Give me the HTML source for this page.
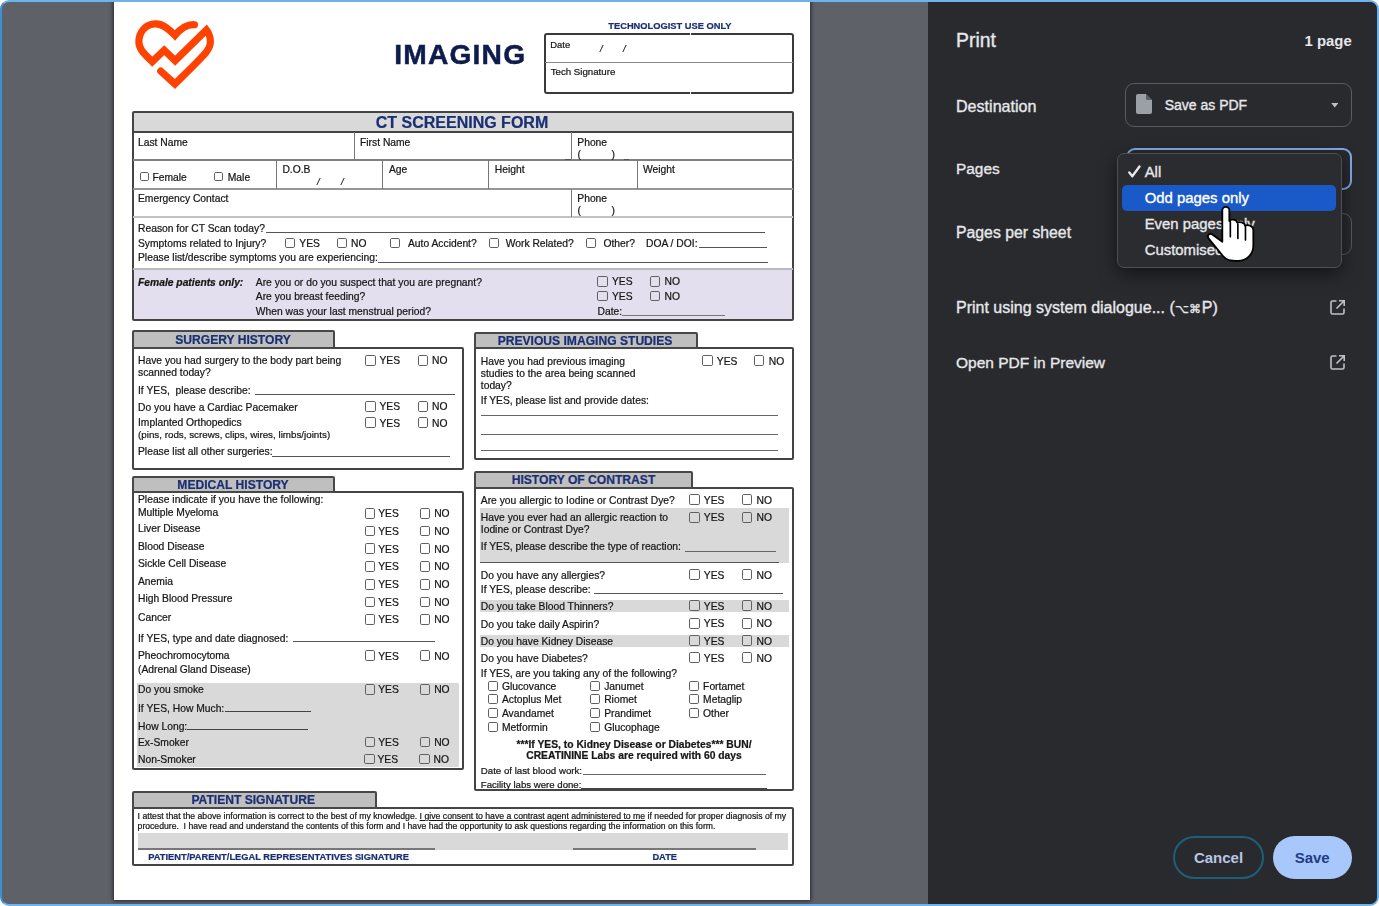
<!DOCTYPE html>
<html><head><meta charset="utf-8"><title>Print</title>
<style>
html,body{margin:0;padding:0;background:#fff}
body{width:1379px;height:906px;overflow:hidden;position:relative;font-family:"Liberation Sans",Arial,sans-serif}
#frame{position:absolute;left:0;top:0;width:1379px;height:906px;box-sizing:border-box;border:2px solid #6db3ee;border-left-color:#3f8fd6;border-radius:9px;background:#5f6169;overflow:hidden}
#root{position:absolute;left:-2px;top:-2px;width:1379px;height:906px;filter:blur(0.45px)}
#pagebg{position:absolute;left:114.2px;top:0;width:696.1px;height:900px;background:#fff;box-shadow:0 0 4px 1px rgba(0,0,0,.6)}
#panel{position:absolute;left:927.5px;top:0;width:452px;height:906px;background:#292a2e}
#page{position:absolute;left:0;top:0;color:#161616;-webkit-text-stroke:0.22px #161616;filter:blur(0.35px)}
.t{position:absolute;white-space:nowrap;line-height:1}
.t.c{text-align:center}
.bd{font-weight:bold}
.p{color:#e6e8eb}
i{display:block}
.abs,.l,.b,.cb,.sel,.menu,.btn{position:absolute;box-sizing:border-box}
.cb{border:1.300px solid #606060;border-radius:1.800px}
.m{-webkit-text-stroke:0.35px #e6e8eb}
.sel{border:1.500px solid #595b60;border-radius:9px}
.menu{background:#2b2c2f;border:1px solid #4e4f53;border-radius:7px;box-shadow:0 6px 18px rgba(0,0,0,.5)}
.btn{border-radius:22px;font-weight:bold;font-size:15px;text-align:center;line-height:39.300px}
</style></head><body>
<div id="frame"><div id="root">
<div id="pagebg"></div>
<div id="page">
<svg class="abs" style="left:120px;top:10px" width="120" height="90" viewBox="0 0 1208 906"><path d="M750 148 C 660 140 600 200 553 255 C 500 200 440 140 360 140 C 250 140 190 230 190 320 C 190 400 250 445 325 520 L 445 405 L 555 510 L 870 200 C 900 240 910 280 910 320 C 910 400 870 430 553 745 L 410 615" fill="none" stroke="#ff4200" stroke-width="72" stroke-linecap="round" stroke-linejoin="miter"/></svg>
<div class="t bd" style="left:394.2px;top:40.4px;font-size:28.2px;color:#0e1c4d;letter-spacing:1.2px;-webkit-text-stroke:0.5px #0e1c4d">IMAGING</div>
<div class="t bd" style="left:608.3px;top:22.3px;font-size:9.3px;color:#1b2f73;-webkit-text-stroke-color:#1b2f73">TECHNOLOGIST USE ONLY</div>
<i class="b" style="left:544.0px;top:33.3px;width:250.0px;height:60.7px;border:2px solid #3a3a3a;background:transparent;border-radius:3px"></i>
<i class="l" style="left:545.0px;top:62.3px;width:248.0px;height:1px;background:#888"></i>
<i class="l" style="left:689.5px;top:33.0px;width:1.3px;height:3.0px;background:#fff;"></i>
<i class="l" style="left:689.5px;top:91.5px;width:1.3px;height:3.0px;background:#fff;"></i>
<div class="t" style="left:550.3px;top:40.3px;font-size:9.4px;">Date</div>
<div class="t" style="left:600.0px;top:44.4px;font-size:9.4px;font-style:italic">/</div>
<div class="t" style="left:623.0px;top:44.4px;font-size:9.4px;font-style:italic">/</div>
<div class="t" style="left:550.7px;top:66.6px;font-size:9.7px;">Tech Signature</div>
<i class="l" style="left:132.7px;top:112.0px;width:660.3px;height:19.5px;background:#d9d9d9;"></i>
<i class="l" style="left:132.7px;top:269.5px;width:660.3px;height:50.3px;background:#e4dfee;"></i>
<i class="b" style="left:131.7px;top:111.0px;width:662.3px;height:209.8px;border:2px solid #444;background:transparent;border-radius:2px"></i>
<i class="l" style="left:132.7px;top:130.5px;width:660.3px;height:2px;background:#444"></i>
<div class="t c bd" style="left:262.0px;width:400px;top:115.4px;font-size:16px;color:#1b2f73;-webkit-text-stroke-color:#1b2f73">CT SCREENING FORM</div>
<i class="l" style="left:132.7px;top:158.5px;width:660.3px;height:2px;background:#808080"></i>
<i class="l" style="left:132.7px;top:187.7px;width:660.3px;height:2px;background:#969696"></i>
<i class="l" style="left:132.7px;top:215.8px;width:660.3px;height:2.4px;background:#c2c2c2"></i>
<i class="l" style="left:132.7px;top:268.3px;width:660.3px;height:2px;background:#bbb"></i>
<i class="l" style="left:353.5px;top:132.0px;width:1px;height:27.5px;background:#777"></i>
<i class="l" style="left:570.5px;top:132.0px;width:1px;height:27.5px;background:#777"></i>
<i class="l" style="left:570.5px;top:188.5px;width:1px;height:28.0px;background:#777"></i>
<i class="l" style="left:276.1px;top:159.5px;width:1px;height:29.0px;background:#777"></i>
<i class="l" style="left:382.2px;top:159.5px;width:1px;height:29.0px;background:#777"></i>
<i class="l" style="left:487.5px;top:159.5px;width:1px;height:29.0px;background:#777"></i>
<i class="l" style="left:636.5px;top:159.5px;width:1px;height:29.0px;background:#777"></i>
<div class="t" style="left:138.0px;top:138.1px;font-size:10.3px;">Last Name</div>
<div class="t" style="left:360.0px;top:138.1px;font-size:10.3px;">First Name</div>
<div class="t" style="left:577.3px;top:138.1px;font-size:10.3px;">Phone</div>
<div class="t" style="left:577.5px;top:150.1px;font-size:10.3px;">(</div>
<div class="t" style="left:611.5px;top:150.1px;font-size:10.3px;">)</div>
<i class="l" style="left:565.0px;top:159.1px;width:6.0px;height:1px;background:#555"></i>
<i class="l" style="left:623.5px;top:159.1px;width:5.5px;height:1px;background:#555"></i>
<i class="cb" style="left:140.0px;top:171.8px;width:9px;height:9px"></i>
<div class="t" style="left:152.5px;top:172.6px;font-size:10.3px;">Female</div>
<i class="cb" style="left:214.0px;top:171.8px;width:9px;height:9px"></i>
<div class="t" style="left:227.8px;top:172.6px;font-size:10.3px;">Male</div>
<div class="t" style="left:282.4px;top:165.1px;font-size:10.3px;">D.O.B</div>
<div class="t" style="left:317.0px;top:177.4px;font-size:9.5px;font-style:italic">/</div>
<div class="t" style="left:341.0px;top:177.4px;font-size:9.5px;font-style:italic">/</div>
<div class="t" style="left:389.0px;top:165.1px;font-size:10.3px;">Age</div>
<div class="t" style="left:494.8px;top:165.1px;font-size:10.3px;">Height</div>
<div class="t" style="left:643.0px;top:165.1px;font-size:10.3px;">Weight</div>
<div class="t" style="left:138.0px;top:193.8px;font-size:10.3px;">Emergency Contact</div>
<div class="t" style="left:577.3px;top:193.8px;font-size:10.3px;">Phone</div>
<div class="t" style="left:577.5px;top:205.6px;font-size:10.3px;">(</div>
<div class="t" style="left:611.5px;top:205.6px;font-size:10.3px;">)</div>
<div class="t" style="left:138.0px;top:223.8px;font-size:10.3px;">Reason for CT Scan today?</div>
<i class="l" style="left:265.5px;top:232.1px;width:499.0px;height:1px;background:#555"></i>
<div class="t" style="left:138.0px;top:238.8px;font-size:10.3px;">Symptoms related to Injury?</div>
<i class="cb" style="left:285.0px;top:238.2px;width:10px;height:10px"></i>
<div class="t" style="left:299.3px;top:239.0px;font-size:10.3px;">YES</div>
<i class="cb" style="left:337.0px;top:238.2px;width:10px;height:10px"></i>
<div class="t" style="left:351.0px;top:239.0px;font-size:10.3px;">NO</div>
<i class="cb" style="left:390.0px;top:238.2px;width:10px;height:10px"></i>
<div class="t" style="left:408.0px;top:239.0px;font-size:10.3px;">Auto Accident?</div>
<i class="cb" style="left:489.0px;top:238.2px;width:10px;height:10px"></i>
<div class="t" style="left:505.7px;top:239.0px;font-size:10.3px;">Work Related?</div>
<i class="cb" style="left:586.0px;top:238.2px;width:10px;height:10px"></i>
<div class="t" style="left:603.4px;top:239.0px;font-size:10.3px;">Other?</div>
<div class="t" style="left:646.0px;top:239.0px;font-size:10.3px;">DOA / DOI:</div>
<i class="l" style="left:698.6px;top:247.0px;width:68.4px;height:1px;background:#555"></i>
<div class="t" style="left:138.0px;top:253.2px;font-size:10.3px;">Please list/describe symptoms you are experiencing:</div>
<i class="l" style="left:378.4px;top:261.5px;width:390.0px;height:1px;background:#555"></i>
<div class="t bd" style="left:138.0px;top:277.9px;font-size:10.3px;font-style:italic">Female patients only:</div>
<div class="t" style="left:255.8px;top:277.9px;font-size:10.3px;">Are you or do you suspect that you are pregnant?</div>
<div class="t" style="left:255.8px;top:291.9px;font-size:10.3px;">Are you breast feeding?</div>
<div class="t" style="left:255.8px;top:306.6px;font-size:10.3px;">When was your last menstrual period?</div>
<i class="cb" style="left:597.0px;top:276.0px;width:10.8px;height:10.8px"></i>
<div class="t" style="left:611.9px;top:277.3px;font-size:10.3px;">YES</div>
<i class="cb" style="left:649.5px;top:276.0px;width:10.8px;height:10.8px"></i>
<div class="t" style="left:664.6px;top:277.3px;font-size:10.3px;">NO</div>
<i class="cb" style="left:597.0px;top:290.5px;width:10.8px;height:10.8px"></i>
<div class="t" style="left:611.9px;top:291.8px;font-size:10.3px;">YES</div>
<i class="cb" style="left:649.5px;top:290.5px;width:10.8px;height:10.8px"></i>
<div class="t" style="left:664.6px;top:291.8px;font-size:10.3px;">NO</div>
<div class="t" style="left:597.6px;top:306.6px;font-size:10.3px;">Date:</div>
<i class="l" style="left:622.0px;top:314.5px;width:103.2px;height:1px;background:#777"></i>
<i class="b" style="left:131.7px;top:347.0px;width:332.3px;height:123.0px;border:2px solid #444;background:transparent;border-radius:2px"></i>
<i class="b" style="left:131.7px;top:330.0px;width:203.3px;height:19.0px;border:2px solid #484848;background:#bfbfbf;border-radius:2px 2px 0 0"></i>
<div class="t c bd" style="left:33.0px;width:400px;top:333.8px;font-size:12.1px;color:#1b2f73;-webkit-text-stroke-color:#1b2f73">SURGERY HISTORY</div>
<div class="t" style="left:138.0px;top:356.1px;font-size:10.3px;">Have you had surgery to the body part being</div>
<div class="t" style="left:138.0px;top:368.3px;font-size:10.3px;">scanned today?</div>
<i class="cb" style="left:365.1px;top:354.9px;width:10.8px;height:10.8px"></i>
<div class="t" style="left:379.5px;top:356.2px;font-size:10.3px;">YES</div>
<i class="cb" style="left:417.5px;top:354.9px;width:10.8px;height:10.8px"></i>
<div class="t" style="left:432.1px;top:356.2px;font-size:10.3px;">NO</div>
<div class="t" style="left:138.0px;top:385.8px;font-size:10.3px;white-space:pre">If YES,  please describe:</div>
<i class="l" style="left:254.5px;top:393.8px;width:200.0px;height:1px;background:#555"></i>
<div class="t" style="left:138.0px;top:402.9px;font-size:10.3px;">Do you have a Cardiac Pacemaker</div>
<i class="cb" style="left:365.1px;top:401.1px;width:10.8px;height:10.8px"></i>
<div class="t" style="left:379.5px;top:402.4px;font-size:10.3px;">YES</div>
<i class="cb" style="left:417.5px;top:401.1px;width:10.8px;height:10.8px"></i>
<div class="t" style="left:432.1px;top:402.4px;font-size:10.3px;">NO</div>
<div class="t" style="left:138.0px;top:418.3px;font-size:10.3px;">Implanted Orthopedics</div>
<i class="cb" style="left:365.1px;top:417.3px;width:10.8px;height:10.8px"></i>
<div class="t" style="left:379.5px;top:418.6px;font-size:10.3px;">YES</div>
<i class="cb" style="left:417.5px;top:417.3px;width:10.8px;height:10.8px"></i>
<div class="t" style="left:432.1px;top:418.6px;font-size:10.3px;">NO</div>
<div class="t" style="left:138.0px;top:430.4px;font-size:9.8px;">(pins, rods, screws, clips, wires, limbs/joints)</div>
<div class="t" style="left:138.0px;top:446.6px;font-size:10.3px;">Please list all other surgeries:</div>
<i class="l" style="left:272.0px;top:455.8px;width:178.0px;height:1px;background:#555"></i>
<i class="b" style="left:473.5px;top:347.3px;width:320.5px;height:112.7px;border:2px solid #444;background:transparent;border-radius:2px"></i>
<i class="b" style="left:473.5px;top:332.0px;width:224.8px;height:17.3px;border:2px solid #484848;background:#bfbfbf;border-radius:2px 2px 0 0"></i>
<div class="t c bd" style="left:385.0px;width:400px;top:334.9px;font-size:12.1px;color:#1b2f73;-webkit-text-stroke-color:#1b2f73">PREVIOUS IMAGING STUDIES</div>
<div class="t" style="left:480.8px;top:356.9px;font-size:10.3px;">Have you had previous imaging</div>
<div class="t" style="left:480.8px;top:368.9px;font-size:10.3px;">studies to the area being scanned</div>
<div class="t" style="left:480.8px;top:380.9px;font-size:10.3px;">today?</div>
<div class="t" style="left:480.8px;top:396.0px;font-size:10.3px;">If YES, please list and provide dates:</div>
<i class="cb" style="left:701.9px;top:355.4px;width:10.8px;height:10.8px"></i>
<div class="t" style="left:716.8px;top:356.7px;font-size:10.3px;">YES</div>
<i class="cb" style="left:753.7px;top:355.4px;width:10.8px;height:10.8px"></i>
<div class="t" style="left:768.8px;top:356.7px;font-size:10.3px;">NO</div>
<i class="l" style="left:480.8px;top:415.4px;width:297.7px;height:1px;background:#666"></i>
<i class="l" style="left:480.8px;top:433.6px;width:297.7px;height:1px;background:#666"></i>
<i class="l" style="left:480.8px;top:450.1px;width:297.7px;height:1px;background:#666"></i>
<i class="b" style="left:131.7px;top:491.0px;width:332.3px;height:278.5px;border:2px solid #444;background:transparent;border-radius:2px"></i>
<i class="b" style="left:131.7px;top:475.5px;width:203.3px;height:17.5px;border:2px solid #484848;background:#bfbfbf;border-radius:2px 2px 0 0"></i>
<div class="t c bd" style="left:33.0px;width:400px;top:478.5px;font-size:12.1px;color:#1b2f73;-webkit-text-stroke-color:#1b2f73">MEDICAL HISTORY</div>
<div class="t" style="left:138.0px;top:495.4px;font-size:10.3px;">Please indicate if you have the following:</div>
<div class="t" style="left:138.0px;top:507.6px;font-size:10.3px;">Multiple Myeloma</div>
<i class="cb" style="left:364.6px;top:507.9px;width:10.8px;height:10.8px"></i>
<div class="t" style="left:378.2px;top:509.2px;font-size:10.3px;">YES</div>
<i class="cb" style="left:419.7px;top:507.9px;width:10.8px;height:10.8px"></i>
<div class="t" style="left:434.2px;top:509.2px;font-size:10.3px;">NO</div>
<div class="t" style="left:138.0px;top:523.6px;font-size:10.3px;">Liver Disease</div>
<i class="cb" style="left:364.6px;top:525.6px;width:10.8px;height:10.8px"></i>
<div class="t" style="left:378.2px;top:526.9px;font-size:10.3px;">YES</div>
<i class="cb" style="left:419.7px;top:525.6px;width:10.8px;height:10.8px"></i>
<div class="t" style="left:434.2px;top:526.9px;font-size:10.3px;">NO</div>
<div class="t" style="left:138.0px;top:541.8px;font-size:10.3px;">Blood Disease</div>
<i class="cb" style="left:364.6px;top:543.4px;width:10.8px;height:10.8px"></i>
<div class="t" style="left:378.2px;top:544.7px;font-size:10.3px;">YES</div>
<i class="cb" style="left:419.7px;top:543.4px;width:10.8px;height:10.8px"></i>
<div class="t" style="left:434.2px;top:544.7px;font-size:10.3px;">NO</div>
<div class="t" style="left:138.0px;top:558.8px;font-size:10.3px;">Sickle Cell Disease</div>
<i class="cb" style="left:364.6px;top:561.1px;width:10.8px;height:10.8px"></i>
<div class="t" style="left:378.2px;top:562.4px;font-size:10.3px;">YES</div>
<i class="cb" style="left:419.7px;top:561.1px;width:10.8px;height:10.8px"></i>
<div class="t" style="left:434.2px;top:562.4px;font-size:10.3px;">NO</div>
<div class="t" style="left:138.0px;top:577.4px;font-size:10.3px;">Anemia</div>
<i class="cb" style="left:364.6px;top:578.9px;width:10.8px;height:10.8px"></i>
<div class="t" style="left:378.2px;top:580.2px;font-size:10.3px;">YES</div>
<i class="cb" style="left:419.7px;top:578.9px;width:10.8px;height:10.8px"></i>
<div class="t" style="left:434.2px;top:580.2px;font-size:10.3px;">NO</div>
<div class="t" style="left:138.0px;top:594.4px;font-size:10.3px;">High Blood Pressure</div>
<i class="cb" style="left:364.6px;top:596.6px;width:10.8px;height:10.8px"></i>
<div class="t" style="left:378.2px;top:597.9px;font-size:10.3px;">YES</div>
<i class="cb" style="left:419.7px;top:596.6px;width:10.8px;height:10.8px"></i>
<div class="t" style="left:434.2px;top:597.9px;font-size:10.3px;">NO</div>
<div class="t" style="left:138.0px;top:613.1px;font-size:10.3px;">Cancer</div>
<i class="cb" style="left:364.6px;top:614.1px;width:10.8px;height:10.8px"></i>
<div class="t" style="left:378.2px;top:615.4px;font-size:10.3px;">YES</div>
<i class="cb" style="left:419.7px;top:614.1px;width:10.8px;height:10.8px"></i>
<div class="t" style="left:434.2px;top:615.4px;font-size:10.3px;">NO</div>
<div class="t" style="left:138.0px;top:633.8px;font-size:10.3px;">If YES, type and date diagnosed:</div>
<i class="l" style="left:292.6px;top:641.3px;width:142.9px;height:1px;background:#555"></i>
<div class="t" style="left:138.0px;top:651.2px;font-size:10.3px;">Pheochromocytoma</div>
<div class="t" style="left:138.0px;top:665.2px;font-size:10.3px;">(Adrenal Gland Disease)</div>
<i class="cb" style="left:364.6px;top:650.2px;width:10.8px;height:10.8px"></i>
<div class="t" style="left:378.2px;top:651.5px;font-size:10.3px;">YES</div>
<i class="cb" style="left:419.7px;top:650.2px;width:10.8px;height:10.8px"></i>
<div class="t" style="left:434.2px;top:651.5px;font-size:10.3px;">NO</div>
<i class="l" style="left:136.5px;top:683.0px;width:322.5px;height:84.0px;background:#d9d9d9;"></i>
<div class="t" style="left:138.0px;top:685.0px;font-size:10.3px;">Do you smoke</div>
<i class="cb" style="left:364.6px;top:684.0px;width:10.8px;height:10.8px"></i>
<div class="t" style="left:378.2px;top:685.3px;font-size:10.3px;">YES</div>
<i class="cb" style="left:419.7px;top:684.0px;width:10.8px;height:10.8px"></i>
<div class="t" style="left:434.2px;top:685.3px;font-size:10.3px;">NO</div>
<div class="t" style="left:138.0px;top:703.6px;font-size:10.3px;">If YES, How Much:</div>
<i class="l" style="left:224.5px;top:711.3px;width:86.5px;height:1px;background:#444"></i>
<div class="t" style="left:138.0px;top:721.6px;font-size:10.3px;">How Long:</div>
<i class="l" style="left:186.5px;top:729.3px;width:121.8px;height:1px;background:#444"></i>
<div class="t" style="left:138.0px;top:737.6px;font-size:10.3px;">Ex-Smoker</div>
<i class="cb" style="left:364.6px;top:736.6px;width:10.8px;height:10.8px"></i>
<div class="t" style="left:378.2px;top:737.9px;font-size:10.3px;">YES</div>
<i class="cb" style="left:419.7px;top:736.6px;width:10.8px;height:10.8px"></i>
<div class="t" style="left:434.2px;top:737.9px;font-size:10.3px;">NO</div>
<div class="t" style="left:138.0px;top:754.6px;font-size:10.3px;">Non-Smoker</div>
<i class="cb" style="left:363.9px;top:753.6px;width:10.8px;height:10.8px"></i>
<div class="t" style="left:377.5px;top:754.9px;font-size:10.3px;">YES</div>
<i class="cb" style="left:419.0px;top:753.6px;width:10.8px;height:10.8px"></i>
<div class="t" style="left:433.5px;top:754.9px;font-size:10.3px;">NO</div>
<i class="b" style="left:473.7px;top:486.5px;width:320.3px;height:304.5px;border:2px solid #444;background:transparent;border-radius:2px"></i>
<i class="b" style="left:473.7px;top:470.5px;width:219.5px;height:18.0px;border:2px solid #484848;background:#bfbfbf;border-radius:2px 2px 0 0"></i>
<div class="t c bd" style="left:383.5px;width:400px;top:473.8px;font-size:12.1px;color:#1b2f73;-webkit-text-stroke-color:#1b2f73">HISTORY OF CONTRAST</div>
<i class="l" style="left:479.8px;top:508.0px;width:308.9px;height:55.3px;background:#d9d9d9;"></i>
<i class="l" style="left:479.8px;top:600.3px;width:308.9px;height:12.0px;background:#d9d9d9;"></i>
<i class="l" style="left:479.8px;top:634.8px;width:308.9px;height:12.0px;background:#d9d9d9;"></i>
<div class="t" style="left:480.8px;top:495.6px;font-size:10.3px;">Are you allergic to Iodine or Contrast Dye?</div>
<i class="cb" style="left:689.0px;top:494.2px;width:10.8px;height:10.8px"></i>
<div class="t" style="left:703.8px;top:495.5px;font-size:10.3px;">YES</div>
<i class="cb" style="left:741.6px;top:494.2px;width:10.8px;height:10.8px"></i>
<div class="t" style="left:756.6px;top:495.5px;font-size:10.3px;">NO</div>
<div class="t" style="left:480.8px;top:513.1px;font-size:10.3px;">Have you ever had an allergic reaction to</div>
<div class="t" style="left:480.8px;top:524.9px;font-size:10.3px;">Iodine or Contrast Dye?</div>
<i class="cb" style="left:689.0px;top:511.9px;width:10.8px;height:10.8px"></i>
<div class="t" style="left:703.8px;top:513.2px;font-size:10.3px;">YES</div>
<i class="cb" style="left:741.6px;top:511.9px;width:10.8px;height:10.8px"></i>
<div class="t" style="left:756.6px;top:513.2px;font-size:10.3px;">NO</div>
<div class="t" style="left:480.8px;top:541.8px;font-size:10.3px;">If YES, please describe the type of reaction:</div>
<i class="l" style="left:684.6px;top:550.5px;width:91.4px;height:1px;background:#666"></i>
<i class="l" style="left:480.0px;top:562.3px;width:299.3px;height:1px;background:#555"></i>
<div class="t" style="left:480.8px;top:570.6px;font-size:10.3px;">Do you have any allergies?</div>
<i class="cb" style="left:689.0px;top:569.4px;width:10.8px;height:10.8px"></i>
<div class="t" style="left:703.8px;top:570.7px;font-size:10.3px;">YES</div>
<i class="cb" style="left:741.6px;top:569.4px;width:10.8px;height:10.8px"></i>
<div class="t" style="left:756.6px;top:570.7px;font-size:10.3px;">NO</div>
<div class="t" style="left:480.8px;top:585.0px;font-size:10.3px;">If YES, please describe:</div>
<i class="l" style="left:593.8px;top:593.0px;width:189.2px;height:1px;background:#555"></i>
<div class="t" style="left:480.8px;top:601.6px;font-size:10.3px;">Do you take Blood Thinners?</div>
<i class="cb" style="left:689.0px;top:600.4px;width:10.8px;height:10.8px"></i>
<div class="t" style="left:703.8px;top:601.7px;font-size:10.3px;">YES</div>
<i class="cb" style="left:741.6px;top:600.4px;width:10.8px;height:10.8px"></i>
<div class="t" style="left:756.6px;top:601.7px;font-size:10.3px;">NO</div>
<div class="t" style="left:480.8px;top:619.5px;font-size:10.3px;">Do you take daily Aspirin?</div>
<i class="cb" style="left:689.0px;top:618.0px;width:10.8px;height:10.8px"></i>
<div class="t" style="left:703.8px;top:619.3px;font-size:10.3px;">YES</div>
<i class="cb" style="left:741.6px;top:618.0px;width:10.8px;height:10.8px"></i>
<div class="t" style="left:756.6px;top:619.3px;font-size:10.3px;">NO</div>
<div class="t" style="left:480.8px;top:636.8px;font-size:10.3px;">Do you have Kidney Disease</div>
<i class="cb" style="left:689.0px;top:635.4px;width:10.8px;height:10.8px"></i>
<div class="t" style="left:703.8px;top:636.7px;font-size:10.3px;">YES</div>
<i class="cb" style="left:741.6px;top:635.4px;width:10.8px;height:10.8px"></i>
<div class="t" style="left:756.6px;top:636.7px;font-size:10.3px;">NO</div>
<div class="t" style="left:480.8px;top:653.8px;font-size:10.3px;">Do you have Diabetes?</div>
<i class="cb" style="left:689.0px;top:652.4px;width:10.8px;height:10.8px"></i>
<div class="t" style="left:703.8px;top:653.7px;font-size:10.3px;">YES</div>
<i class="cb" style="left:741.6px;top:652.4px;width:10.8px;height:10.8px"></i>
<div class="t" style="left:756.6px;top:653.7px;font-size:10.3px;">NO</div>
<div class="t" style="left:480.8px;top:668.5px;font-size:10.3px;">If YES, are you taking any of the following?</div>
<i class="cb" style="left:487.8px;top:680.5px;width:10.2px;height:10.2px"></i>
<div class="t" style="left:501.9px;top:681.6px;font-size:10.3px;">Glucovance</div>
<i class="cb" style="left:590.0px;top:680.5px;width:10.2px;height:10.2px"></i>
<div class="t" style="left:604.2px;top:681.6px;font-size:10.3px;">Janumet</div>
<i class="cb" style="left:689.1px;top:680.5px;width:10.2px;height:10.2px"></i>
<div class="t" style="left:703.1px;top:681.6px;font-size:10.3px;">Fortamet</div>
<i class="cb" style="left:487.8px;top:694.2px;width:10.2px;height:10.2px"></i>
<div class="t" style="left:501.9px;top:695.3px;font-size:10.3px;">Actoplus Met</div>
<i class="cb" style="left:590.0px;top:694.2px;width:10.2px;height:10.2px"></i>
<div class="t" style="left:604.2px;top:695.3px;font-size:10.3px;">Riomet</div>
<i class="cb" style="left:689.1px;top:694.2px;width:10.2px;height:10.2px"></i>
<div class="t" style="left:703.1px;top:695.3px;font-size:10.3px;">Metaglip</div>
<i class="cb" style="left:487.8px;top:708.1px;width:10.2px;height:10.2px"></i>
<div class="t" style="left:501.9px;top:709.2px;font-size:10.3px;">Avandamet</div>
<i class="cb" style="left:590.0px;top:708.1px;width:10.2px;height:10.2px"></i>
<div class="t" style="left:604.2px;top:709.2px;font-size:10.3px;">Prandimet</div>
<i class="cb" style="left:689.1px;top:708.1px;width:10.2px;height:10.2px"></i>
<div class="t" style="left:703.1px;top:709.2px;font-size:10.3px;">Other</div>
<i class="cb" style="left:487.8px;top:721.6px;width:10.2px;height:10.2px"></i>
<div class="t" style="left:501.9px;top:722.7px;font-size:10.3px;">Metformin</div>
<i class="cb" style="left:590.0px;top:721.6px;width:10.2px;height:10.2px"></i>
<div class="t" style="left:604.2px;top:722.7px;font-size:10.3px;">Glucophage</div>
<div class="t c bd" style="left:434.0px;width:400px;top:739.5px;font-size:10.3px;">***If YES, to Kidney Disease or Diabetes*** BUN/</div>
<div class="t c bd" style="left:434.0px;width:400px;top:751.0px;font-size:10.3px;">CREATININE Labs are required with 60 days</div>
<div class="t" style="left:480.8px;top:766.1px;font-size:9.7px;">Date of last blood work:</div>
<i class="l" style="left:582.6px;top:774.0px;width:183.7px;height:1px;background:#666"></i>
<div class="t" style="left:480.8px;top:779.7px;font-size:9.65px;">Facility labs were done:</div>
<i class="l" style="left:581.0px;top:787.8px;width:185.5px;height:1px;background:#444"></i>
<i class="b" style="left:131.7px;top:807.0px;width:662.3px;height:59.3px;border:2px solid #444;background:transparent;border-radius:2px"></i>
<i class="b" style="left:131.7px;top:791.0px;width:244.9px;height:18.0px;border:2px solid #484848;background:#bfbfbf;border-radius:2px 2px 0 0"></i>
<div class="t c bd" style="left:53.2px;width:400px;top:794.3px;font-size:12.1px;color:#1b2f73;-webkit-text-stroke-color:#1b2f73">PATIENT SIGNATURE</div>
<div class="t" style="left:137.6px;top:812.0px;font-size:8.7px;">I attest that the above information is correct to the best of my knowledge. <u>I give consent to have a contrast agent administered to me</u> if needed for proper diagnosis of my</div>
<div class="t" style="left:137.6px;top:822.0px;font-size:8.63px;white-space:pre">procedure.  I have read and understand the contents of this form and I have had the opportunity to ask questions regarding the information on this form.</div>
<i class="l" style="left:137.6px;top:833.0px;width:650.4px;height:17.3px;background:#d9d9d9;"></i>
<i class="l" style="left:137.6px;top:848.2px;width:297.0px;height:1.5px;background:#777"></i>
<i class="l" style="left:572.7px;top:848.2px;width:183.3px;height:1.5px;background:#777"></i>
<div class="t bd" style="left:148.3px;top:852.7px;font-size:9.3px;color:#1b2f73;-webkit-text-stroke-color:#1b2f73">PATIENT/PARENT/LEGAL REPRESENTATIVES SIGNATURE</div>
<div class="t bd" style="left:652.4px;top:852.7px;font-size:9.3px;color:#1b2f73;-webkit-text-stroke-color:#1b2f73">DATE</div>
</div>
<div id="panel"></div>
<div class="t p" style="left:956.0px;top:30.6px;font-size:19.4px;-webkit-text-stroke:0.35px #e6e8eb">Print</div>
<div class="t p bd" style="left:1304.5px;top:33.8px;font-size:14.9px;">1 page</div>
<div class="t p m" style="left:956.0px;top:97.5px;font-size:16.1px;">Destination</div>
<div class="t p m" style="left:956.0px;top:161.2px;font-size:15.4px;">Pages</div>
<div class="t p m" style="left:956.0px;top:225.3px;font-size:15.8px;">Pages per sheet</div>
<div class="t p m" style="left:956.0px;top:300.2px;font-size:16px;">Print using system dialogue... (<span style="font-size:.76em;letter-spacing:.5px;position:relative;top:-.5px">⌥⌘</span>P)</div>
<div class="t p m" style="left:956.0px;top:354.7px;font-size:15.5px;">Open PDF in Preview</div>
<i class="sel" style="left:1125.3px;top:83.400px;width:227px;height:43.300px"></i>
<svg class="abs" style="left:1135.5px;top:94.300px" width="16" height="20" viewBox="0 0 16 20"><path d="M2 0h8l6 6v12a2 2 0 0 1-2 2H2a2 2 0 0 1-2-2V2a2 2 0 0 1 2-2z" fill="#9aa0a6"/><path d="M10 0v4.5A1.5 1.5 0 0 0 11.500 6H16z" fill="#292a2e" opacity=".55"/></svg>
<div class="t p m" style="left:1164.7px;top:98.3px;font-size:14px;">Save as PDF</div>
<svg class="abs" style="left:1330.5px;top:103px" width="7.600" height="4.500" viewBox="0 0 8 5"><path d="M0 0h8L4 5z" fill="#bdc1c6"/></svg>
<i class="sel" style="left:1125.5px;top:148.3px;width:226.5px;height:42px;border:2px solid #7fa9e8"></i>
<i class="sel" style="left:1125.5px;top:213px;width:226.5px;height:41.5px"></i>
<div class="menu" style="left:1116.6px;top:153px;width:225.300px;height:115px"></div>
<i class="l" style="left:1122px;top:184.8px;width:214.4px;height:26.2px;background:#1a5ac8;border-radius:5px"></i>
<svg class="abs" style="left:1127.5px;top:165px" width="13" height="13" viewBox="0 0 13 13"><path d="M1.300 7.500l3 3.800L11.500 1.500" fill="none" stroke="#e8eaed" stroke-width="2.300" stroke-linecap="round" stroke-linejoin="round"/></svg>
<div class="t p m" style="left:1144.7px;top:165.3px;font-size:14.9px;">All</div>
<div class="t p" style="left:1144.7px;top:191.3px;font-size:14.9px;color:#fff;-webkit-text-stroke:0.35px #fff">Odd pages only</div>
<div class="t p m" style="left:1144.7px;top:217.0px;font-size:14.9px;">Even pages only</div>
<div class="t p m" style="left:1144.7px;top:242.5px;font-size:14.9px;">Customised</div>
<svg class="abs" style="left:1329px;top:299.1px" width="17" height="17" viewBox="0 0 17 17"><path d="M7.500 2H3.500A1.500 1.500 0 0 0 2 3.500v10A1.500 1.500 0 0 0 3.500 15h10a1.500 1.500 0 0 0 1.500-1.500V9.500" fill="none" stroke="#bdc1c6" stroke-width="1.600"/><path d="M10 1.800h5.200V7M15 2L7.500 9.500" fill="none" stroke="#bdc1c6" stroke-width="1.600"/></svg>
<svg class="abs" style="left:1329px;top:353.5px" width="17" height="17" viewBox="0 0 17 17"><path d="M7.500 2H3.500A1.500 1.500 0 0 0 2 3.500v10A1.500 1.500 0 0 0 3.500 15h10a1.500 1.500 0 0 0 1.500-1.500V9.500" fill="none" stroke="#bdc1c6" stroke-width="1.600"/><path d="M10 1.800h5.200V7M15 2L7.500 9.500" fill="none" stroke="#bdc1c6" stroke-width="1.600"/></svg>
<div class="btn" style="left:1173px;top:836px;width:91px;height:43.3px;border:2px solid #1d5f7d;color:#b9c4e6">Cancel</div>
<div class="btn" style="left:1272.6px;top:836px;width:79.2px;height:43.3px;line-height:43.3px;background:#a8c7fa;color:#1f3d87">Save</div>
<svg class="abs" style="left:1195px;top:195px" width="70" height="75" viewBox="0 0 846 906"><path d="M330 185A42.500 42.500 0 0 1 415 185L415 315C425 290 500 285 512 335C530 320 600 325 607 375C630 355 705 365 705 425L705 610C705 720 620 795 520 795C430 795 380 790 340 740L165 525C140 490 175 455 210 478L330 565Z" fill="#fff" stroke="#000" stroke-width="22" stroke-linejoin="round"/><path d="M427 325V505M518 350V525M610 390V545" stroke="#000" stroke-width="20" stroke-linecap="round"/></svg>
</div></div>
</body></html>
